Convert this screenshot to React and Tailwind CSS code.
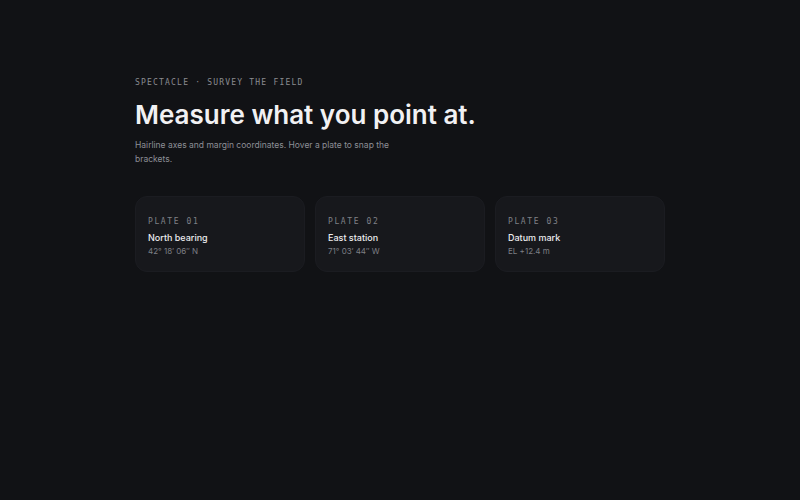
import React from "react";

const plates = [
  { id: "01", title: "North bearing", coord: "42° 18′ 06″ N" },
  { id: "02", title: "East station", coord: "71° 03′ 44″ W" },
  { id: "03", title: "Datum mark", coord: "EL +12.4 m" },
];

export default function App() {
  return (
    <div className="min-h-[500px] w-full bg-[#111215] font-['Inter',sans-serif]">
      <div className="mx-auto w-[530px] pt-[78px]">
        <p className="font-['DejaVu_Sans_Mono',monospace] text-[8px] leading-[10px] tracking-[0.15em] text-[#8a8b90]">
          SPECTACLE · SURVEY THE FIELD
        </p>
        <h1 className="mt-[11px] text-[26px] font-semibold leading-[32px] tracking-normal text-[#f1f1f3]">
          Measure what you point at.
        </h1>
        <p className="mt-[7px] w-[265px] text-[8.5px] leading-[14px] text-[#8d8f95]">
          Hairline axes and margin coordinates. Hover a plate to snap the brackets.
        </p>
        <div className="mt-[30px] grid grid-cols-3 gap-[10px]">
          {plates.map((p) => (
            <div
              key={p.id}
              className="h-[76px] rounded-[12px] border border-[#1b1c21] bg-[#17181c] px-[12px] pt-[20px]"
            >
              <p className="font-['DejaVu_Sans_Mono',monospace] text-[8px] leading-[10px] tracking-[0.2em] text-[#7f8086]">
                PLATE {p.id}
              </p>
              <p className="mt-[5px] text-[9px] font-medium leading-[12px] text-[#ececee]">
                {p.title}
              </p>
              <p className="mt-[1px] text-[8px] leading-[12px] text-[#7d7f85]">
                {p.coord}
              </p>
            </div>
          ))}
        </div>
      </div>
    </div>
  );
}
